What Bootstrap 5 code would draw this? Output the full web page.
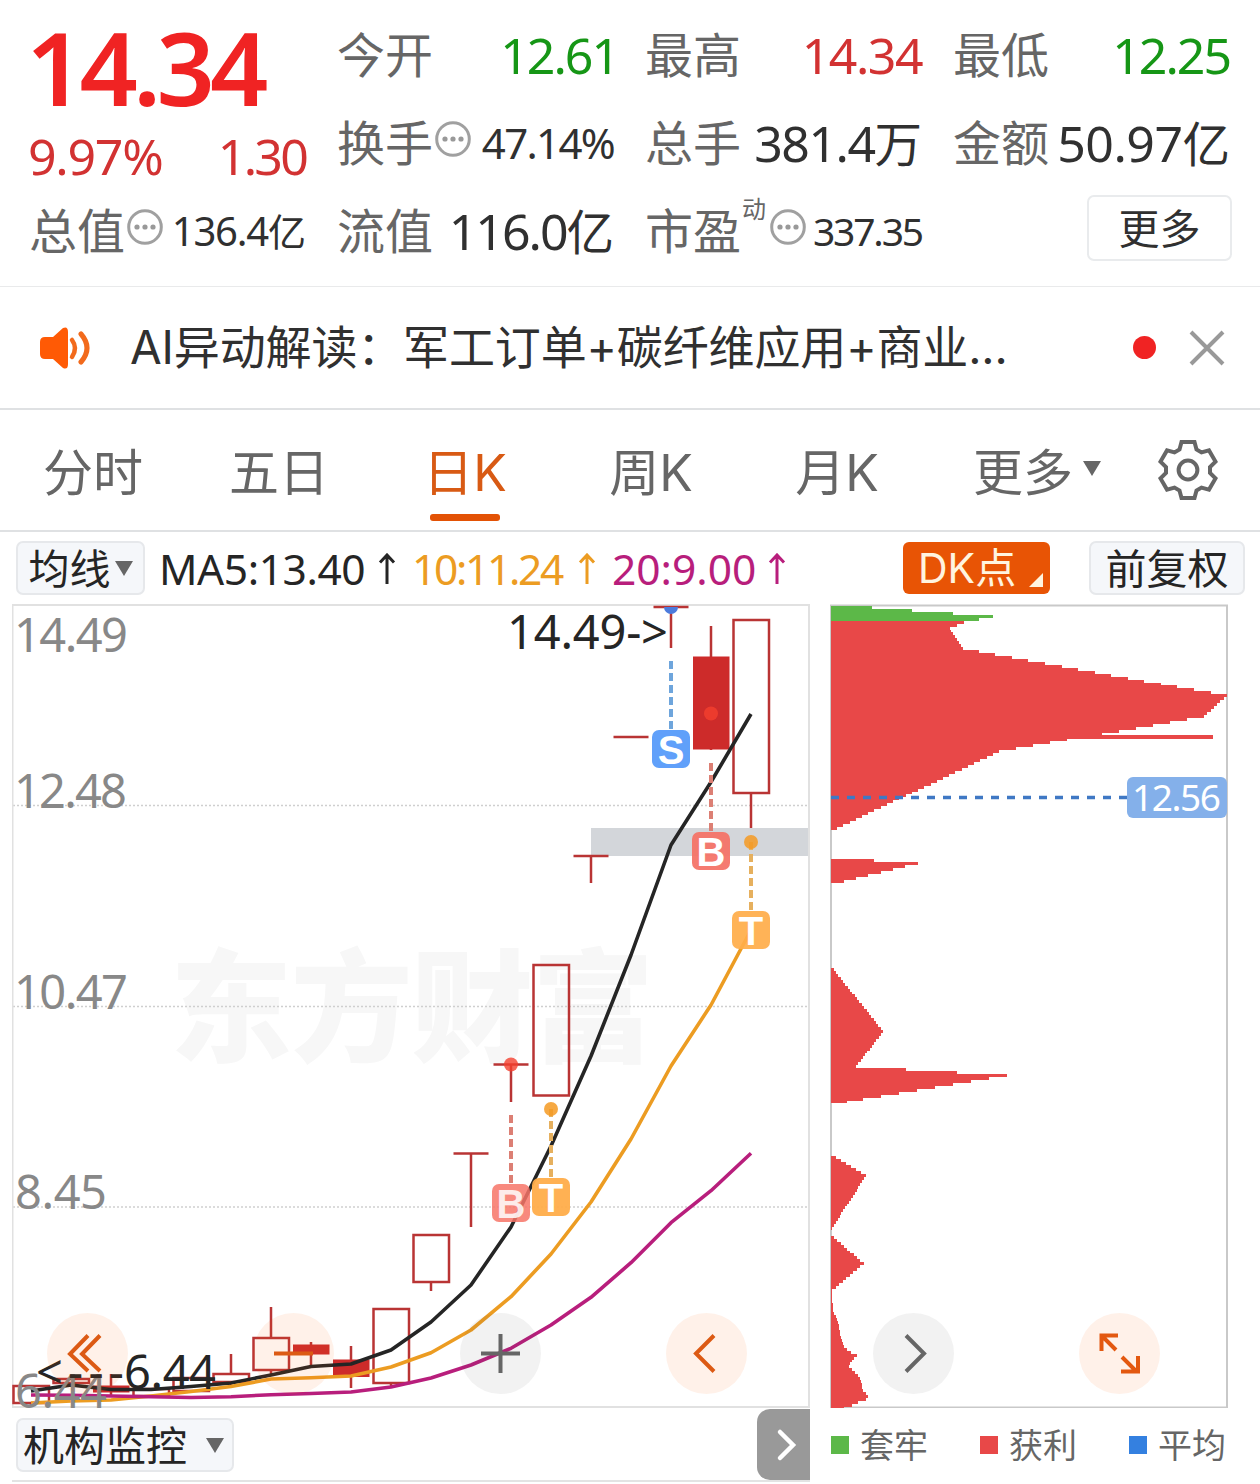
<!DOCTYPE html>
<html lang="zh-CN">
<head>
<meta charset="utf-8">
<meta name="viewport" content="width=device-width, initial-scale=1">
<title>日K</title>
<link href="https://cdn.jsdelivr.net/npm/bootstrap@5.3.0/dist/css/bootstrap.min.css" rel="stylesheet">
<style>
body{font-family:"Noto Sans","Noto Sans CJK SC",sans-serif;color:#303030;background:#fff;width:1260px;height:1484px;overflow:hidden;line-height:1}
.hair{border-bottom:2px solid #dfe1e3}
.quote-head{display:grid;grid-template-columns:repeat(4,277px);column-gap:31px;grid-template-rows:repeat(3,88px);padding:11px 29px 0 29px;height:287px;border-bottom:1px solid #e9eaeb}
.price-box{grid-row:span 2}
.price-now{font-size:102px;font-weight:600;color:#f02323;letter-spacing:-.047em;height:118px;line-height:112px;margin-left:-3px}
.price-sub{font-size:50px;color:#d23232;letter-spacing:-.025em;height:56px;line-height:54px;margin-left:-1px}
.q-lab{font-size:48px;color:#666;white-space:nowrap;height:60px;line-height:60px}
.q-val{font-size:50px;white-space:nowrap;height:60px;line-height:60px}
.q-val.mid{font-size:42px}
.q-val.sml{font-size:40px}
.q-val.xs{font-size:39px}
.ls-1{letter-spacing:-.01em}.ls-2{letter-spacing:-.02em}.ls-3{letter-spacing:-.03em}.ls-4{letter-spacing:-.04em}.ls-5{letter-spacing:-.055em}
.hang-one{margin-right:-4px}
.q-val b{font-weight:400;font-size:.95em;letter-spacing:0}
.up{color:#d23232}.down{color:#169616}
.dyn{font-size:24px;color:#666;height:54px;margin:-4px 2px 0 1px}
.info{margin:0 0 9px 2px}
.more-btn{width:145px;height:66px;border:2px solid #e9ebed;border-radius:7px;font-size:41px;color:#303030;margin:-6px -2px 0 0}
.news{height:123px;padding:0 34px 0 38px}
.news-text{font-family:Inter,"Noto Sans CJK SC",sans-serif;font-size:46px;margin:-2px 0 0 36px;letter-spacing:-.003em}
.dot{width:23px;height:23px;border-radius:50%;background:#f02323}
.tabs{height:122px;font-family:Inter,"Noto Sans CJK SC",sans-serif}
.tab-i{width:186px;font-size:50px;color:#666;height:120px;position:relative;padding-top:5px}
.tab-i.on{color:#d85a14}
.tab-i.on::after{content:"";position:absolute;left:58px;bottom:9px;width:70px;height:7px;border-radius:3px;background:#e35205}
.tab-i.last{padding-left:43px}
.caret{width:0;height:0;border-left:9px solid transparent;border-right:9px solid transparent;border-top:15px solid #666}
.tab-i .caret{margin:0 0 8px 10px}
.gear{margin-right:40px}
.inds{height:73px;padding:9px 15px 0 16px}
.pill{height:54px;border:2px solid #e6e8eb;border-radius:7px;background:#f5f7fa;font-size:41px;color:#252525}
.ma{font-size:42.5px;white-space:nowrap;height:56px}
.dk{width:147px;height:52px;border-radius:6px;background:#e85405;color:#fff4e0;font-size:41px;position:relative;padding-left:15px;margin-top:1px;font-family:Inter,"Noto Sans CJK SC",sans-serif}
.dk::after{content:"";position:absolute;right:7px;bottom:7px;border-left:14px solid transparent;border-bottom:14px solid #fff4e0}
.charts{height:804px;padding-left:12px;position:relative;margin-top:-1px}
.ctl-bar{position:absolute;left:47px;right:100px;bottom:14px}
.ctl{width:81px;height:81px;border-radius:50%;background:rgba(255,96,16,.09)}
.ctl.off{background:rgba(70,70,70,.07)}
.foot{height:76px;padding-left:12px}
.foot-l{width:798px;height:74px;border-bottom:2px solid #e3e3e3}
.next-btn{width:53px;height:71px;background:#999;border-radius:13px 0 0 13px;margin-top:1px}
.legend-row{width:395px;margin-left:21px;font-size:34px;color:#666;height:74px}
.sw{width:18px;height:18px;margin-right:11px}
svg{display:block;flex:none}
</style>
<script src="https://cdn.jsdelivr.net/npm/bootstrap@5.3.0/dist/js/bootstrap.bundle.min.js"></script>
</head>
<body>
<svg width="0" height="0" class="position-absolute">
  <symbol id="info" viewBox="0 0 36 36"><circle cx="18" cy="18" r="16.3" fill="none" stroke="#a0a0a0" stroke-width="3"/><g fill="#999"><circle cx="10" cy="18" r="2.6"/><circle cx="18" cy="18" r="2.6"/><circle cx="26" cy="18" r="2.6"/></g></symbol>
  <symbol id="arr" viewBox="0 0 18 32"><path d="M9 31V2M2 9.5L9 2l7 7.500" fill="none" stroke="currentColor" stroke-width="3"/></symbol>
</svg>

<header class="quote-head">
  <div class="price-box">
    <div class="price-now">14.34</div>
    <div class="price-sub d-flex justify-content-between"><span>9.97%</span><span class="ls-5">1.30</span></div>
  </div>
  <div class="d-flex justify-content-between align-items-center"><span class="q-lab">今开</span><span class="q-val down ls-4 hang-one">12.61</span></div>
  <div class="d-flex justify-content-between align-items-center"><span class="q-lab">最高</span><span class="q-val up ls-3">14.34</span></div>
  <div class="d-flex justify-content-between align-items-center"><span class="q-lab">最低</span><span class="q-val down ls-4">12.25</span></div>
  <div class="d-flex justify-content-between align-items-center"><span class="d-flex align-items-center"><span class="q-lab">换手</span><svg class="info" width="36" height="36"><use href="#info"/></svg></span><span class="q-val mid ls-4">47.14%</span></div>
  <div class="d-flex justify-content-between align-items-center"><span class="q-lab">总手</span><span class="q-val ls-3">381.4<b>万</b></span></div>
  <div class="d-flex justify-content-between align-items-center"><span class="q-lab">金额</span><span class="q-val ls-1">50.97<b>亿</b></span></div>
  <div class="d-flex justify-content-between align-items-center"><span class="d-flex align-items-center"><span class="q-lab">总值</span><svg class="info" width="36" height="36"><use href="#info"/></svg></span><span class="q-val sml ls-3">136.4<b>亿</b></span></div>
  <div class="d-flex justify-content-between align-items-center"><span class="q-lab">流值</span><span class="q-val ls-4">116.0<b>亿</b></span></div>
  <div class="d-flex justify-content-between align-items-center"><span class="d-flex align-items-center"><span class="q-lab">市盈</span><span class="dyn align-self-start">动</span><svg class="info" width="36" height="36"><use href="#info"/></svg></span><span class="q-val xs ls-5">337.35</span></div>
  <div class="d-flex justify-content-end align-items-center"><button class="btn more-btn p-0 lh-1">更多</button></div>
</header>

<section class="news hair d-flex align-items-center">
  <svg width="56" height="46" viewBox="0 0 56 46"><path d="M7 12h8L25 3q5-2 5 4v32q0 6-5 4L15 34H7q-5 0-5-5V17q0-5 5-5z" fill="#ff5a05"/><path d="M34 15q6 8 0 17" fill="none" stroke="#f26a1c" stroke-width="4.5" stroke-linecap="round"/><path d="M43 9q12 14 0 28" fill="none" stroke="#f26a1c" stroke-width="5" stroke-linecap="round"/></svg>
  <div class="news-text">AI异动解读：军工订单+碳纤维应用+商业...</div>
  <span class="dot ms-auto"></span>
  <svg class="ms-4" width="46" height="40" viewBox="0 0 46 40"><path d="M11 4l32 32M43 4L11 36" stroke="#999" stroke-width="4" fill="none"/></svg>
</section>

<nav class="tabs hair d-flex align-items-center">
  <div class="tab-i d-flex align-items-center justify-content-center">分时</div>
  <div class="tab-i d-flex align-items-center justify-content-center">五日</div>
  <div class="tab-i on d-flex align-items-center justify-content-center">日K</div>
  <div class="tab-i d-flex align-items-center justify-content-center">周K</div>
  <div class="tab-i d-flex align-items-center justify-content-center">月K</div>
  <div class="tab-i last d-flex align-items-center text-nowrap">更多<span class="caret"></span></div>
  <svg class="gear ms-auto" width="64" height="64" viewBox="-32 -32 64 64" fill="none" stroke="#666" stroke-width="4"><path d="M-8.5-20.5L-6.5-28H6.5L8.500-20.5L13.500-17.600L21-19.600L27.500-8.400L22-2.900V2.900L27.500 8.400L21 19.600L13.500 17.600L8.500 20.500L6.500 28H-6.500L-8.500 20.500L-13.500 17.600L-21 19.600L-27.500 8.400L-22 2.900V-2.900L-27.500-8.400L-21-19.600L-13.500-17.600Z"/><circle r="9.400"/></svg>
</nav>

<section class="inds d-flex align-items-start">
  <div class="pill d-flex align-items-center justify-content-center" style="width:129px">均线<span class="caret ms-1"></span></div>
  <div class="ma ls-1 d-flex align-items-center" style="margin-left:14px;color:#252525"><span style="width:219px">MA5:13.40</span><svg width="18" height="32"><use href="#arr"/></svg></div>
  <div class="ma ls-5 d-flex align-items-center" style="margin-left:16px;color:#ec9c22"><span style="width:166px">10:11.24</span><svg width="18" height="32"><use href="#arr"/></svg></div>
  <div class="ma d-flex align-items-center" style="margin-left:16px;color:#b81e7c"><span style="width:156px">20:9.00</span><svg width="18" height="32"><use href="#arr"/></svg></div>
  <div class="dk d-flex align-items-center ms-auto">DK点</div>
  <div class="pill d-flex align-items-center justify-content-center" style="width:156px;margin-left:39px">前复权</div>
</section>

<main class="charts d-flex">
  <svg width="798" height="804" viewBox="12 604 798 804" font-family="'Noto Sans','Noto Sans CJK SC',sans-serif">
    <text x="170" y="1052" font-size="122" font-weight="900" fill="#f7f7f7" textLength="484">东方财富</text>
    <g stroke="#cfcfcf" stroke-width="1.500" stroke-dasharray="2 2"><path d="M13 805.500H809M13 1006.500H809M13 1207H809"/></g>
    <rect x="591" y="828" width="218" height="28" fill="#d3d6da"/>
    <path d="M12 605H809V1407H12.500V605" fill="none" stroke="#e1e1e1" stroke-width="2"/>
    <g id="candles" stroke="#b93434" stroke-width="2.500" fill="none"></g>
    <path d="M664 607a7 7 0 0 0 14 0z" fill="#4c7bdc"/>
    <g fill="none" stroke-width="3.600" stroke-linejoin="round">
      <polyline stroke="#252525" points="31,1391 71,1385 111,1389.500 151,1389.500 191,1386.500 231,1383 271,1375 311,1366.500 351,1364 391,1350 431,1322 471,1285 511,1227 551,1146 591,1056 631,955 671,845 711,782 751,714"/>
      <polyline stroke="#ec9c22" points="31,1403 71,1401 111,1400 151,1396 191,1391.500 231,1386.500 271,1379 311,1377.700 351,1376 391,1367 431,1352.700 471,1330 511,1296.700 551,1254 591,1202 631,1139 671,1066 711,1005 751,930"/>
      <polyline stroke="#b81e7c" points="31,1395 71,1395.300 111,1396 151,1396.700 191,1397.500 231,1396.700 271,1394.700 311,1393.500 351,1392 391,1387 431,1378 471,1365 511,1348.300 551,1325 591,1297.300 631,1262.700 671,1222.700 711,1190.700 751,1153.300"/>
    </g>
    <g stroke-width="4" stroke-dasharray="8 4">
      <path d="M671 661V729" stroke="#6ea5dc"/><path d="M711 763V831M511 1115V1183" stroke="#dc7f74"/><path d="M751 842V910M551 1109V1177" stroke="#e6b05e"/>
    </g>
    <g fill="#f4402e" fill-opacity=".8"><circle cx="711" cy="713.500" r="7"/><circle cx="511" cy="1064.500" r="7"/></g>
    <g fill="#f59a22" fill-opacity=".85"><circle cx="751" cy="842" r="7"/><circle cx="551" cy="1109" r="7"/></g>
    <g font-weight="700" font-size="40" fill="#fff" text-anchor="middle" font-family="'Liberation Sans',sans-serif">
      <rect x="652" y="730" width="38" height="38" rx="7" fill="#60a0fa"/><text x="671" y="763.500">S</text>
      <rect x="692" y="832" width="38" height="38" rx="7" fill="#f47468" fill-opacity=".95"/><text x="711" y="865.500">B</text>
      <rect x="732" y="911" width="38" height="38" rx="7" fill="#ffad4a" fill-opacity=".93"/><text x="751" y="944.500">T</text>
      <rect x="492" y="1184" width="38" height="38" rx="7" fill="#f77467" fill-opacity=".85"/><text x="511" y="1217.500" fill-opacity=".85">B</text>
      <rect x="532" y="1178" width="38" height="38" rx="7" fill="#ffad4a" fill-opacity=".95"/><text x="551" y="1211.500">T</text>
    </g>
    <g font-size="47" fill="#888">
      <text x="14" y="651.500" textLength="114">14.49</text><text x="14" y="808" textLength="113">12.48</text><text x="14" y="1009" textLength="114">10.47</text><text x="15" y="1209" textLength="92">8.45</text><text x="15" y="1407.500" textLength="92">6.44</text>
    </g>
    <g font-size="47" fill="#252525">
      <text x="507" y="649" textLength="161">14.49-&gt;</text><text x="36" y="1389" textLength="88">&lt;---</text><text x="124" y="1389" textLength="92">6.44</text>
    </g>
  </svg>
  <svg width="400" height="804" viewBox="830 604 400 804" style="margin-left:20px" font-family="'Noto Sans',sans-serif">
    <path d="M831 605.500H1227V1407.500H831Z" fill="none" stroke="#c9c9c9" stroke-width="2"/>
    <g id="chips" shape-rendering="crispEdges"></g>
    <path d="M831 797.500H1127" stroke="#3f78c4" stroke-width="3.500" stroke-dasharray="8 8"/>
    <rect x="1127" y="777" width="100" height="41" rx="6" fill="#84b0ea"/>
    <text x="1132" y="811" font-size="37" fill="#fff" textLength="89">12.56</text>
  </svg>
  <div class="ctl-bar d-flex justify-content-between">
    <div class="ctl"><svg viewBox="0 0 81 81" fill="none" stroke="#dc5a14" stroke-width="4"><path d="M41 22.500L23 41L41 58M53 22.500L35 41L53 58"/></svg></div>
    <div class="ctl"><svg viewBox="0 0 81 81" stroke="#dc5a14" stroke-width="4"><path d="M21 40.500H60"/></svg></div>
    <div class="ctl off"><svg viewBox="0 0 81 81" stroke="#666" stroke-width="4"><path d="M21 40.500H60M40.500 21V60"/></svg></div>
    <div class="ctl"><svg viewBox="0 0 81 81" fill="none" stroke="#dc5a14" stroke-width="4"><path d="M48 22.500L30 40.500L48 58.500"/></svg></div>
    <div class="ctl off"><svg viewBox="0 0 81 81" fill="none" stroke="#666" stroke-width="4"><path d="M33 22.500L51 40.500L33 58.500"/></svg></div>
    <div class="ctl"><svg viewBox="0 0 81 81" fill="none" stroke="#e35810" stroke-width="4"><path d="M22.500 38V22.500H39M23 23L37 37M43 44L58 59M59 43V58.500H42"/></svg></div>
  </div>
</main>

<footer class="foot d-flex">
  <div class="foot-l d-flex justify-content-between">
    <div class="pill d-flex align-items-center" style="width:218px;margin:10px 0 0 4px;padding-left:5px">机构监控<span class="caret" style="margin-left:19px"></span></div>
    <div class="next-btn d-flex align-items-center justify-content-center"><svg width="24" height="34" viewBox="0 0 24 34" class="ms-1"><path d="M6 4L19 17L6 30" fill="none" stroke="#fff" stroke-width="4.500" stroke-linecap="round"/></svg></div>
  </div>
  <div class="legend-row d-flex justify-content-between align-items-center">
    <span class="d-flex align-items-center"><span class="sw" style="background:#5cb848"></span>套牢</span>
    <span class="d-flex align-items-center"><span class="sw" style="background:#e84848"></span>获利</span>
    <span class="d-flex align-items-center"><span class="sw" style="background:#3480e0"></span>平均</span>
  </div>
</footer>

<script>
// Candles: centre x, kind (h hollow, f filled, t flat), body top, body bottom, wick top, wick bottom
const rows=[[31,'h',1386,1403,1386,1407],[71,'h',1379,1383,1379,1383],[111,'f',1386,1392,1374,1395],[151,'h',1389,1396,1389,1396],[191,'h',1378,1391,1378,1391],[231,'h',1374,1382,1354,1385],[271,'h',1338,1370,1307,1374],[311,'f',1345,1354,1342,1365],[351,'f',1360,1376.5,1346,1388],[391,'h',1309,1383,1309,1387],[431,'h',1235,1282,1235,1291],[471,'t',1153.5,1153.5,1153,1227],[511,'t',1064.5,1064.5,1064,1102],[551,'h',965,1095.5,965,1095],[591,'t',856,856,856,883],[631,'t',737,737,737,737],[671,'t',607,607,607,648],[711,'f',657,749,626,750],[751,'h',620,793,620,828]];
document.getElementById('candles').innerHTML=rows.map(([x,k,a,b,c,d])=>
 `<path d="M${x} ${c}V${a}M${x} ${b}V${d}"/>`+(k==='t'?`<path d="M${x-17.5} ${a}H${x+17.5}"/>`:`<rect x="${x-17.5}" y="${a}" width="35.5" height="${b-a}"${k==='f'?' fill="#cd2b2a" stroke="#cd2b2a" stroke-width="1"':''}/>`)).join('');

// Chip distribution: [row, length] knots, linear between knots, 0 = empty row
const knots=[[0,40.5],[1,81],[2,122],[3,162],[4,148],[5,133],[6,126],[7,118.5],[14,131.5],[15,147.7],[29,379.5],[30,396],[37,373],[38,356],[42,287.5],[43,270.5],[44,381.5],[45,236],[49,168],[75,6],[76,0],[85,0],[86,43],[87,86.5],[93,12.5],[94,0],[122,0],[123,2.5],[144,52],[156,25],[157,75],[158,125.5],[159,176],[167,32],[168,16],[169,0],[186,0],[187,5],[193,35],[211,1],[212,0],[213,0],[214,3],[223,32.5],[232,1],[234,1],[239,2],[243,7],[246,8.5],[249,10.5],[251,13],[252,16],[253,20],[254,25.5],[255,22.5],[257,19],[258,18],[261,27],[263,30],[266,32],[268,37],[269,35],[270,27],[271,21],[272,12.5]];
let s='';
for(let i=0;i<knots.length-1;i++){const [a,u]=knots[i],[b,v]=knots[i+1];
 for(let k=a;k<b||(i===knots.length-2&&k===b);k++){const w=u+(v-u)*(k-a)/(b-a);
  if(w>0)s+=`<rect x="831" y="${(606+k*2.943).toFixed(2)}" width="${w.toFixed(1)}" height="${k===272?2:3.05}" fill="${k<5?'#5cb848':'#e84848'}"/>`;}}
document.getElementById('chips').innerHTML=s;
</script>
</body>
</html>
